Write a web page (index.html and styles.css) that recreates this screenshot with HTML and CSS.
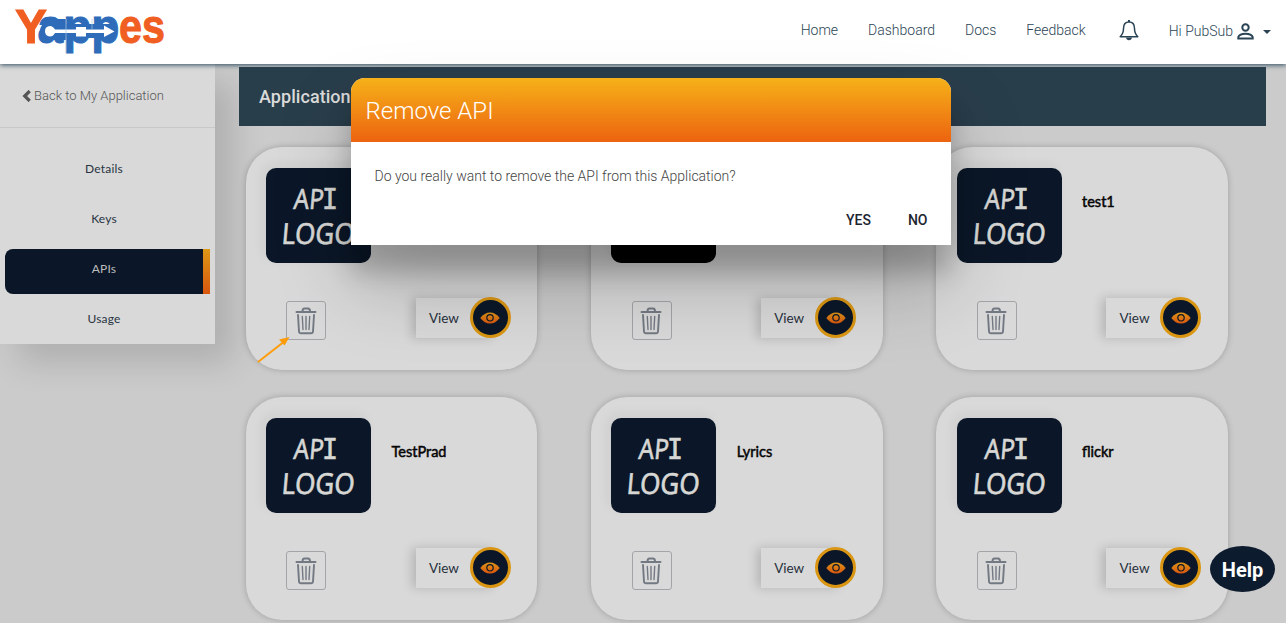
FILE: index.html
```html
<!DOCTYPE html>
<html lang="en">
<head>
<meta charset="utf-8">
<title>Yappes</title>
<link rel="stylesheet" href="styles.css">
</head>
<body>
<svg class="defs" width="0" height="0">
  <defs>
    <linearGradient id="fire" x1="0" y1="0" x2="0" y2="1"><stop offset="0" stop-color="#dd9518"/><stop offset="1" stop-color="#d8560f"/></linearGradient>
    <symbol id="api-logo" viewBox="0 0 105 95">
      <g class="chalk">
        <text transform="translate(27 41) skewX(-5)" font-size="28" textLength="30" lengthAdjust="spacingAndGlyphs">AP</text>
        <text class="mono" x="56" y="41" font-size="28" textLength="16" lengthAdjust="spacingAndGlyphs">I</text>
        <text transform="translate(15 76) skewX(-5)" font-size="29" textLength="73" lengthAdjust="spacingAndGlyphs">LOGO</text>
      </g>
    </symbol>
    <symbol id="trash" viewBox="0 0 22 28">
      <g fill="none" stroke="#737983" stroke-linejoin="round" stroke-linecap="round">
        <path stroke-width="2" d="M1.500 5H20.500M7.500 4.500Q7.500 1.500 9.500 1.500H13Q15 1.500 15 4.500"/>
        <path stroke-width="1.900" d="M3 8L4 24.500Q4.200 26.300 6 26.300H16Q17.800 26.300 18 24.500L19 8"/>
        <path stroke-width="1.400" d="M7.300 9.500L8 22.500M11 9.500V22.500M14.700 9.500L14 22.500"/>
      </g>
    </symbol>
    <symbol id="eye" viewBox="0 0 20 12">
      <path fill="url(#fire)" d="M.3 6Q4.500.5 10 .5T19.700 6Q15.500 11.500 10 11.500T.3 6Z"/>
      <circle cx="10" cy="5.800" r="3.200" fill="none" stroke="#0b1728" stroke-width="1.200"/>
    </symbol>
  </defs>
</svg>

<header class="topbar">
  <svg class="brand" width="160" height="60" viewBox="0 0 160 60">
    <g font-size="49">
      <text x="15" y="43" class="orange" textLength="32" lengthAdjust="spacingAndGlyphs">Y</text>
      <text x="119" y="43" class="orange" textLength="46" lengthAdjust="spacingAndGlyphs">es</text>
      <text x="37.500" y="43" class="blue" textLength="82" lengthAdjust="spacingAndGlyphs">app</text>
    </g>
    <path fill="#2e6bb9" d="M50 19H66V40H50Q40 38 40 31T50 19ZM66 24H116V38H66Z"/>
    <path fill="#fff" d="M50 26Q53 26 55 29.500H76V27H86V29.500H104V25.500L114.500 31.500L104 37V33H86V36.500H76V33H55Q53 36.500 50 36.500Q45 36 45 31.200T50 26Z"/>
    <path stroke="#a9cbe4" stroke-width=".7" d="M66 19V53M92 19V29"/>
  </svg>
  <nav class="nav">
    <a>Home</a><a>Dashboard</a><a>Docs</a><a>Feedback</a>
  </nav>
  <svg class="bell" width="20" height="21" viewBox="0 0 20 21"><path fill="none" stroke="#2b4455" stroke-width="1.500" stroke-linejoin="round" d="M10 2C6 2 4.500 5 4.500 8.500C4.500 13 3.500 14.500 1.200 16.700H18.800C16.500 14.500 15.500 13 15.500 8.500C15.500 5 14 2 10 2Z"/><path fill="#2b4455" d="M9 0H11V2H9ZM7 17.500H13Q12.500 20.300 10 20.300T7 17.500Z"/></svg>
  <span class="user">Hi PubSub</span>
  <svg class="person" width="17" height="17" viewBox="0 0 17 17"><g fill="none" stroke="#2b4455" stroke-width="2"><circle cx="8.500" cy="4.500" r="3.200"/><path d="M1.300 15.500V14Q2.500 10.800 8.500 10.800T15.700 14V15.500Z"/></g></svg>
  <i class="caret"></i>
</header>

<div class="page">
  <aside class="side">
    <a class="back"><svg width="9" height="12" viewBox="0 0 9 12"><path fill="none" stroke="#555" stroke-width="3.200" d="M7.700 1L2.700 6L7.700 11"/></svg><span>Back to My Application</span></a>
    <ul class="menu">
      <li>Details</li><li>Keys</li><li class="active">APIs</li><li>Usage</li>
    </ul>
  </aside>
  <main class="main">
    <h1 class="banner">Application</h1>
    <section class="cards">
      <article class="card">
        <div class="top"><div class="logo"><svg width="105" height="95"><use href="#api-logo"/></svg></div></div>
        <div class="actions"><span class="bin"><svg width="22" height="28"><use href="#trash"/></svg></span><span class="view">View<i class="eye"><svg width="20" height="12"><use href="#eye"/></svg></i></span></div>
      </article>
      <article class="card">
        <div class="top"><div class="logo black"></div></div>
        <div class="actions"><span class="bin"><svg width="22" height="28"><use href="#trash"/></svg></span><span class="view">View<i class="eye"><svg width="20" height="12"><use href="#eye"/></svg></i></span></div>
      </article>
      <article class="card">
        <div class="top"><div class="logo"><svg width="105" height="95"><use href="#api-logo"/></svg></div><h2>test1</h2></div>
        <div class="actions"><span class="bin"><svg width="22" height="28"><use href="#trash"/></svg></span><span class="view">View<i class="eye"><svg width="20" height="12"><use href="#eye"/></svg></i></span></div>
      </article>
      <article class="card">
        <div class="top"><div class="logo"><svg width="105" height="95"><use href="#api-logo"/></svg></div><h2>TestPrad</h2></div>
        <div class="actions"><span class="bin"><svg width="22" height="28"><use href="#trash"/></svg></span><span class="view">View<i class="eye"><svg width="20" height="12"><use href="#eye"/></svg></i></span></div>
      </article>
      <article class="card">
        <div class="top"><div class="logo"><svg width="105" height="95"><use href="#api-logo"/></svg></div><h2>Lyrics</h2></div>
        <div class="actions"><span class="bin"><svg width="22" height="28"><use href="#trash"/></svg></span><span class="view">View<i class="eye"><svg width="20" height="12"><use href="#eye"/></svg></i></span></div>
      </article>
      <article class="card">
        <div class="top"><div class="logo"><svg width="105" height="95"><use href="#api-logo"/></svg></div><h2>flickr</h2></div>
        <div class="actions"><span class="bin"><svg width="22" height="28"><use href="#trash"/></svg></span><span class="view">View<i class="eye"><svg width="20" height="12"><use href="#eye"/></svg></i></span></div>
      </article>
    </section>
  </main>
</div>

<svg class="pointer" width="36" height="30" viewBox="0 0 36 30"><path stroke="#ff9c0b" stroke-width="2" d="M3 27L28 7.500"/><path fill="#ff9c0b" d="M34.500 2L29.500 10.500L24 4.500Z"/></svg>

<div class="dialog">
  <div class="dialog-head">Remove API</div>
  <p class="dialog-text">Do you really want to remove the API from this Application?</p>
  <div class="dialog-actions"><button>YES</button><button>NO</button></div>
</div>

<div class="help">Help</div>
</body>
</html>
```
FILE: styles.css
```css
* { box-sizing: border-box; }
body { margin: 0; height: 623px; overflow: hidden; background: #cbcbcb; font-family: Roboto, sans-serif; position: relative; }
.defs { position: absolute; }
.topbar { position: relative; z-index: 2; height: 64px; background: #fff; display: flex; align-items: flex-start; box-shadow: 0 1px 5px #2b4a5c; color: #2b4455; font-size: 14px; font-weight: 300; }
.brand { width: 160px; flex: none; overflow: visible; font-family: "Liberation Sans", sans-serif; font-weight: bold; }
.orange { fill: #f05e22; stroke: #f05e22; stroke-width: 1px; }
.blue { fill: #2e6bb9; stroke: #2e6bb9; stroke-width: 1px; }
.nav { display: flex; gap: 30px; margin-left: auto; padding-top: 20px; line-height: 20px; }
.bell { margin: 20px 0 0 33px; }
.user { margin: 21px 0 0 30px; line-height: 20px; }
.person { margin: 23px 0 0 4px; }
.caret { border: 4px solid transparent; border-top-color: #2b4455; border-bottom: 0; margin: 30px 15px 0 9px; }
.page { display: flex; align-items: flex-start; }
.side { width: 215px; height: 280px; flex: none; background: #d9d9d9; box-shadow: 18px 18px 32px rgba(0,0,0,.14); }
.back { display: flex; align-items: center; gap: 3px; height: 64px; padding-left: 22px; border-bottom: 1px solid #c8c8c8; font-size: 13px; font-weight: 300; color: #555; }
.menu { list-style: none; margin: 21px 0 0; padding: 0 5px; display: flex; flex-direction: column; gap: 5px; font: 12px/40px Lato, sans-serif; color: #283442; text-align: center; letter-spacing: .2px; }
.menu li { height: 45px; padding-right: 7px; border-radius: 8px 0 0 8px; }
.menu .active { color: #bbb; background: linear-gradient(#dd9815, #da560e) right/7px 100% no-repeat #0b1728; }
.main { flex: 1; padding: 3px 20px 0 24px; }
.banner { margin: 0; height: 59px; padding-left: 20px; background: #293e4b; color: #dadada; font-size: 18px; line-height: 59px; font-weight: 500; letter-spacing: .05px; }
.cards { display: grid; grid-template-columns: repeat(3, 291.700px); gap: 27px 53.600px; padding: 21px 0 0 6.700px; }
.card { isolation: isolate; height: 223px; padding: 21px 26.500px 0 20.300px; background: #d9d9d9; border-radius: 36px; box-shadow: 0 0 6px rgba(0,0,0,.22); }
.top { display: flex; gap: 20.500px; }
.logo { width: 105px; height: 95px; border-radius: 10px; background: #0b1728; box-shadow: -4px -4px 12px rgba(0,0,0,.05); }
.black { background: #000; }
.chalk { font-family: "Noto Sans", sans-serif; fill: #d7d7d5; stroke: #d7d7d5; stroke-width: .600px; }
.mono { font-family: "DejaVu Sans Mono", monospace; }
h2 { margin: 24px 0 0; font: 14.500px/20px Lato, sans-serif; color: #050505; -webkit-text-stroke: .500px #050505; }
.actions { display: flex; justify-content: space-between; align-items: flex-start; padding: 34px 0 0 20.300px; }
.bin { width: 40px; height: 39px; margin-top: 4px; border: 1px solid #a4a4a8; border-radius: 3px; display: grid; place-items: center; }
.bin svg { margin-right: 1px; }
.view { width: 95px; height: 40px; margin-top: 1px; padding-left: 13px; display: flex; justify-content: space-between; font: 13.500px/41px Lato, sans-serif; color: #26303c; background: linear-gradient(#d9d9d9, #d9d9d9) left/75px 100% no-repeat; position: relative; }
.view::before { content: ""; position: absolute; z-index: -1; left: 0; top: 0; width: 80px; height: 40px; box-shadow: -4px 0 10px rgba(0,0,0,.17); }
.eye { width: 41px; height: 41px; margin-top: -1px; border: 3px solid #da9613; border-radius: 50%; background: #0b1728; display: grid; place-items: center; }
.eye svg { display: block; }
.pointer { position: absolute; left: 255px; top: 335px; }
.dialog { position: absolute; z-index: 5; left: 351px; top: 78px; width: 600px; height: 167px; background: #fff; border-radius: 14px 14px 0 0; box-shadow: 0 27px 24px rgba(0,0,0,.2), 0 40px 77px rgba(0,0,0,.22); }
.dialog-head { height: 64px; padding-left: 14.500px; border-radius: 14px 14px 0 0; background: linear-gradient(#f6b119, #ec6310); color: #fff; font-size: 24px; line-height: 66px; font-weight: 300; }
.dialog-text { margin: 24px 23.500px 0; color: #444; font-size: 14px; line-height: 20px; font-weight: 300; }
.dialog-actions { display: flex; justify-content: flex-end; gap: 37px; padding: 24px 23.500px 0; }
.dialog-actions button { border: 0; padding: 0; background: none; font: 500 14px/20px Roboto, sans-serif; color: #1c2530; }
.help { position: absolute; left: 1210px; top: 546px; width: 65px; height: 46px; border-radius: 50%; background: #0d1b2e; color: #fff; font-size: 20px; line-height: 48px; font-weight: 700; text-align: center; }
```
